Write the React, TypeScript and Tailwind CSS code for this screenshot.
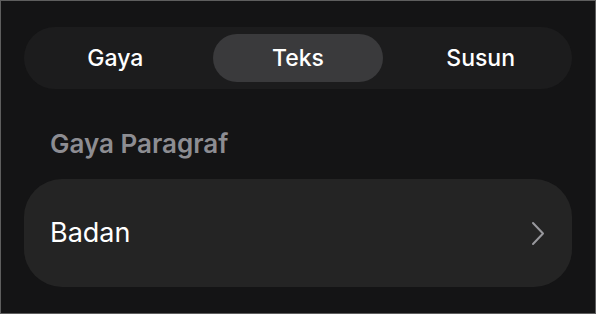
import React from 'react';

const tabs = ['Gaya', 'Teks', 'Susun'];

const ChevronRight: React.FC = () => (
  <svg width="14" height="25" viewBox="0 0 14 25" fill="none" className="text-[#98989d]">
    <path d="M2 2 L12 12.5 L2 23" stroke="currentColor" strokeWidth="2" strokeLinecap="round" strokeLinejoin="round" />
  </svg>
);

const App: React.FC = () => {
  const active = 'Teks';

  return (
    <div
      className="w-[596px] h-[314px] border border-[#5e5e5e] bg-[#141415] px-[23px] pt-[26px] overflow-hidden"
      style={{ fontFamily: 'Inter, "Noto Sans", sans-serif' }}
    >
      {/* segmented control */}
      <div className="h-[62px] rounded-full bg-[#1c1c1d] py-[7px] grid grid-cols-3">
        {tabs.map(tab => (
          <div
            key={tab}
            className={
              tab === active
                ? 'mx-[6px] rounded-full bg-[#3a3a3c] flex items-center justify-center text-white text-[23px] font-medium'
                : 'flex items-center justify-center text-white text-[23px] font-medium'
            }
          >
            {tab}
          </div>
        ))}
      </div>

      <h2 className="mt-[39px] mb-[19px] pl-[26px] text-[26px] leading-[32px] font-semibold text-[#8d8d92]">
        Gaya Paragraf
      </h2>

      <div className="h-[108px] rounded-[38px] bg-[#242424] pl-[26px] pr-[27px] flex items-center justify-between">
        <span className="text-white text-[27px]">Badan</span>
        <ChevronRight />
      </div>
    </div>
  );
};

export default App;
